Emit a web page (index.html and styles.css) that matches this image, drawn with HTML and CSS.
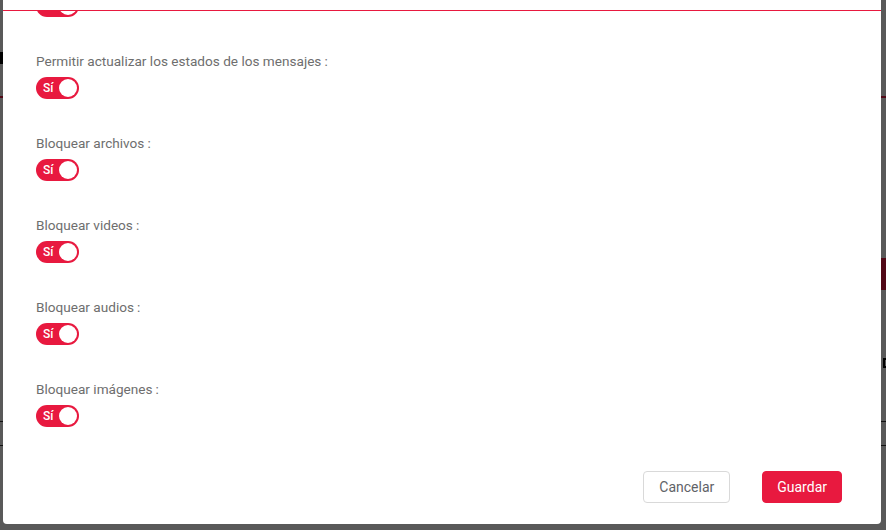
FILE: index.html
```html
<!DOCTYPE html>
<html lang="es">
<head>
<meta charset="utf-8">
<title>Configuración</title>
<link rel="stylesheet" href="styles.css">
</head>
<body>
<div class="page">
  <div class="page-head"><span class="page-mark"></span></div>
  <div class="page-row"></div>
  <div class="page-row tall"><span class="page-btn"></span></div>
  <div class="page-row text"><span class="page-dot"></span></div>
  <div class="page-row line"></div>
  <div class="page-row line"></div>
</div>
<div class="mask">
  <div class="modal">
    <div class="modal-head"></div>
    <div class="modal-body">
      <div class="form">
        <div class="item first">
          <button class="switch"><span class="switch-text">Sí</span><span class="knob"></span></button>
        </div>
        <div class="item">
          <label class="label">Permitir actualizar los estados de los mensajes</label>
          <button class="switch"><span class="switch-text">Sí</span><span class="knob"></span></button>
        </div>
        <div class="item">
          <label class="label">Bloquear archivos</label>
          <button class="switch"><span class="switch-text">Sí</span><span class="knob"></span></button>
        </div>
        <div class="item">
          <label class="label">Bloquear videos</label>
          <button class="switch"><span class="switch-text">Sí</span><span class="knob"></span></button>
        </div>
        <div class="item">
          <label class="label">Bloquear audios</label>
          <button class="switch"><span class="switch-text">Sí</span><span class="knob"></span></button>
        </div>
        <div class="item">
          <label class="label">Bloquear imágenes</label>
          <button class="switch"><span class="switch-text">Sí</span><span class="knob"></span></button>
        </div>
      </div>
    </div>
    <div class="modal-foot">
      <button class="btn">Cancelar</button>
      <button class="btn primary">Guardar</button>
    </div>
  </div>
</div>
</body>
</html>
```
FILE: styles.css
```css
* { box-sizing: border-box; }
html, body { margin: 0; height: 100%; }
body {
  font-family: Roboto, "Liberation Sans", Arial, sans-serif;
  background: #ffffff;
  overflow: hidden;
  position: relative;
}
.page {
  height: 530px;
  display: flex;
  flex-direction: column;
  background: #fff;
}
.page-head {
  height: 98px;
  border-bottom: 2px solid #e8193f;
  display: flex;
  align-items: center;
}
.page-mark { width: 3px; height: 12px; background: #000; margin-top: 20px; }
.page-row { height: 160px; }
.page-row.tall { height: 100px; display: flex; justify-content: flex-end; align-items: flex-start; }
.page-btn { background: #e8193f; width: 5px; height: 32px; }
.page-row.text { height: 40px; display: flex; justify-content: flex-end; }
.page-dot { width: 3px; height: 10px; border: 2px solid #000; border-right: 0; }
.page-row.line { height: 24px; border-bottom: 1px solid #333; }

.mask {
  position: absolute;
  inset: 0;
  background: rgba(0, 0, 0, 0.65);
  padding: 0 5px 6px 3px;
  display: flex;
}
.modal {
  flex: 1;
  background: #fff;
  border-radius: 0 0 4px 4px;
  display: flex;
  flex-direction: column;
  overflow: hidden;
}
.modal-head {
  height: 11px;
  flex: none;
  border-bottom: 1px solid #e8193f;
}
.modal-body {
  flex: 1;
  overflow: hidden;
  padding: 0 33px;
}
.form { display: flex; flex-direction: column; }
.item {
  display: flex;
  flex-direction: column;
  align-items: flex-start;
  margin-bottom: 33px;
}
.item.first { margin-top: -16px; }
.label {
  font-size: 13.6px;
  line-height: 22px;
  color: #6e6e6e;
  margin-bottom: 5px;
}
.label::after {
  content: ":";
  margin: 0 8px 0 3px;
}
.switch {
  position: relative;
  width: 43px;
  height: 22px;
  border: 0;
  border-radius: 100px;
  background: #e8193f;
  padding: 0;
  display: flex;
  align-items: center;
  font-family: inherit;
}
.switch-text {
  color: #fff;
  font-size: 12px;
  font-weight: 500;
  margin-left: 7px;
}
.knob {
  position: absolute;
  top: 2px;
  right: 2px;
  width: 18px;
  height: 18px;
  border-radius: 50%;
  background: #fff;
}
.modal-foot {
  flex: none;
  display: flex;
  justify-content: flex-end;
  gap: 32px;
  padding: 12px 39px 21px 0;
}
.btn {
  height: 32px;
  padding: 0 15px;
  font-family: inherit;
  font-size: 14px;
  border-radius: 4px;
  border: 1px solid #d9d9d9;
  background: #fff;
  color: #5f6368;
}
.btn.primary {
  background: #e8193f;
  border-color: #e8193f;
  color: #fff;
  padding: 0 14px;
}
```
